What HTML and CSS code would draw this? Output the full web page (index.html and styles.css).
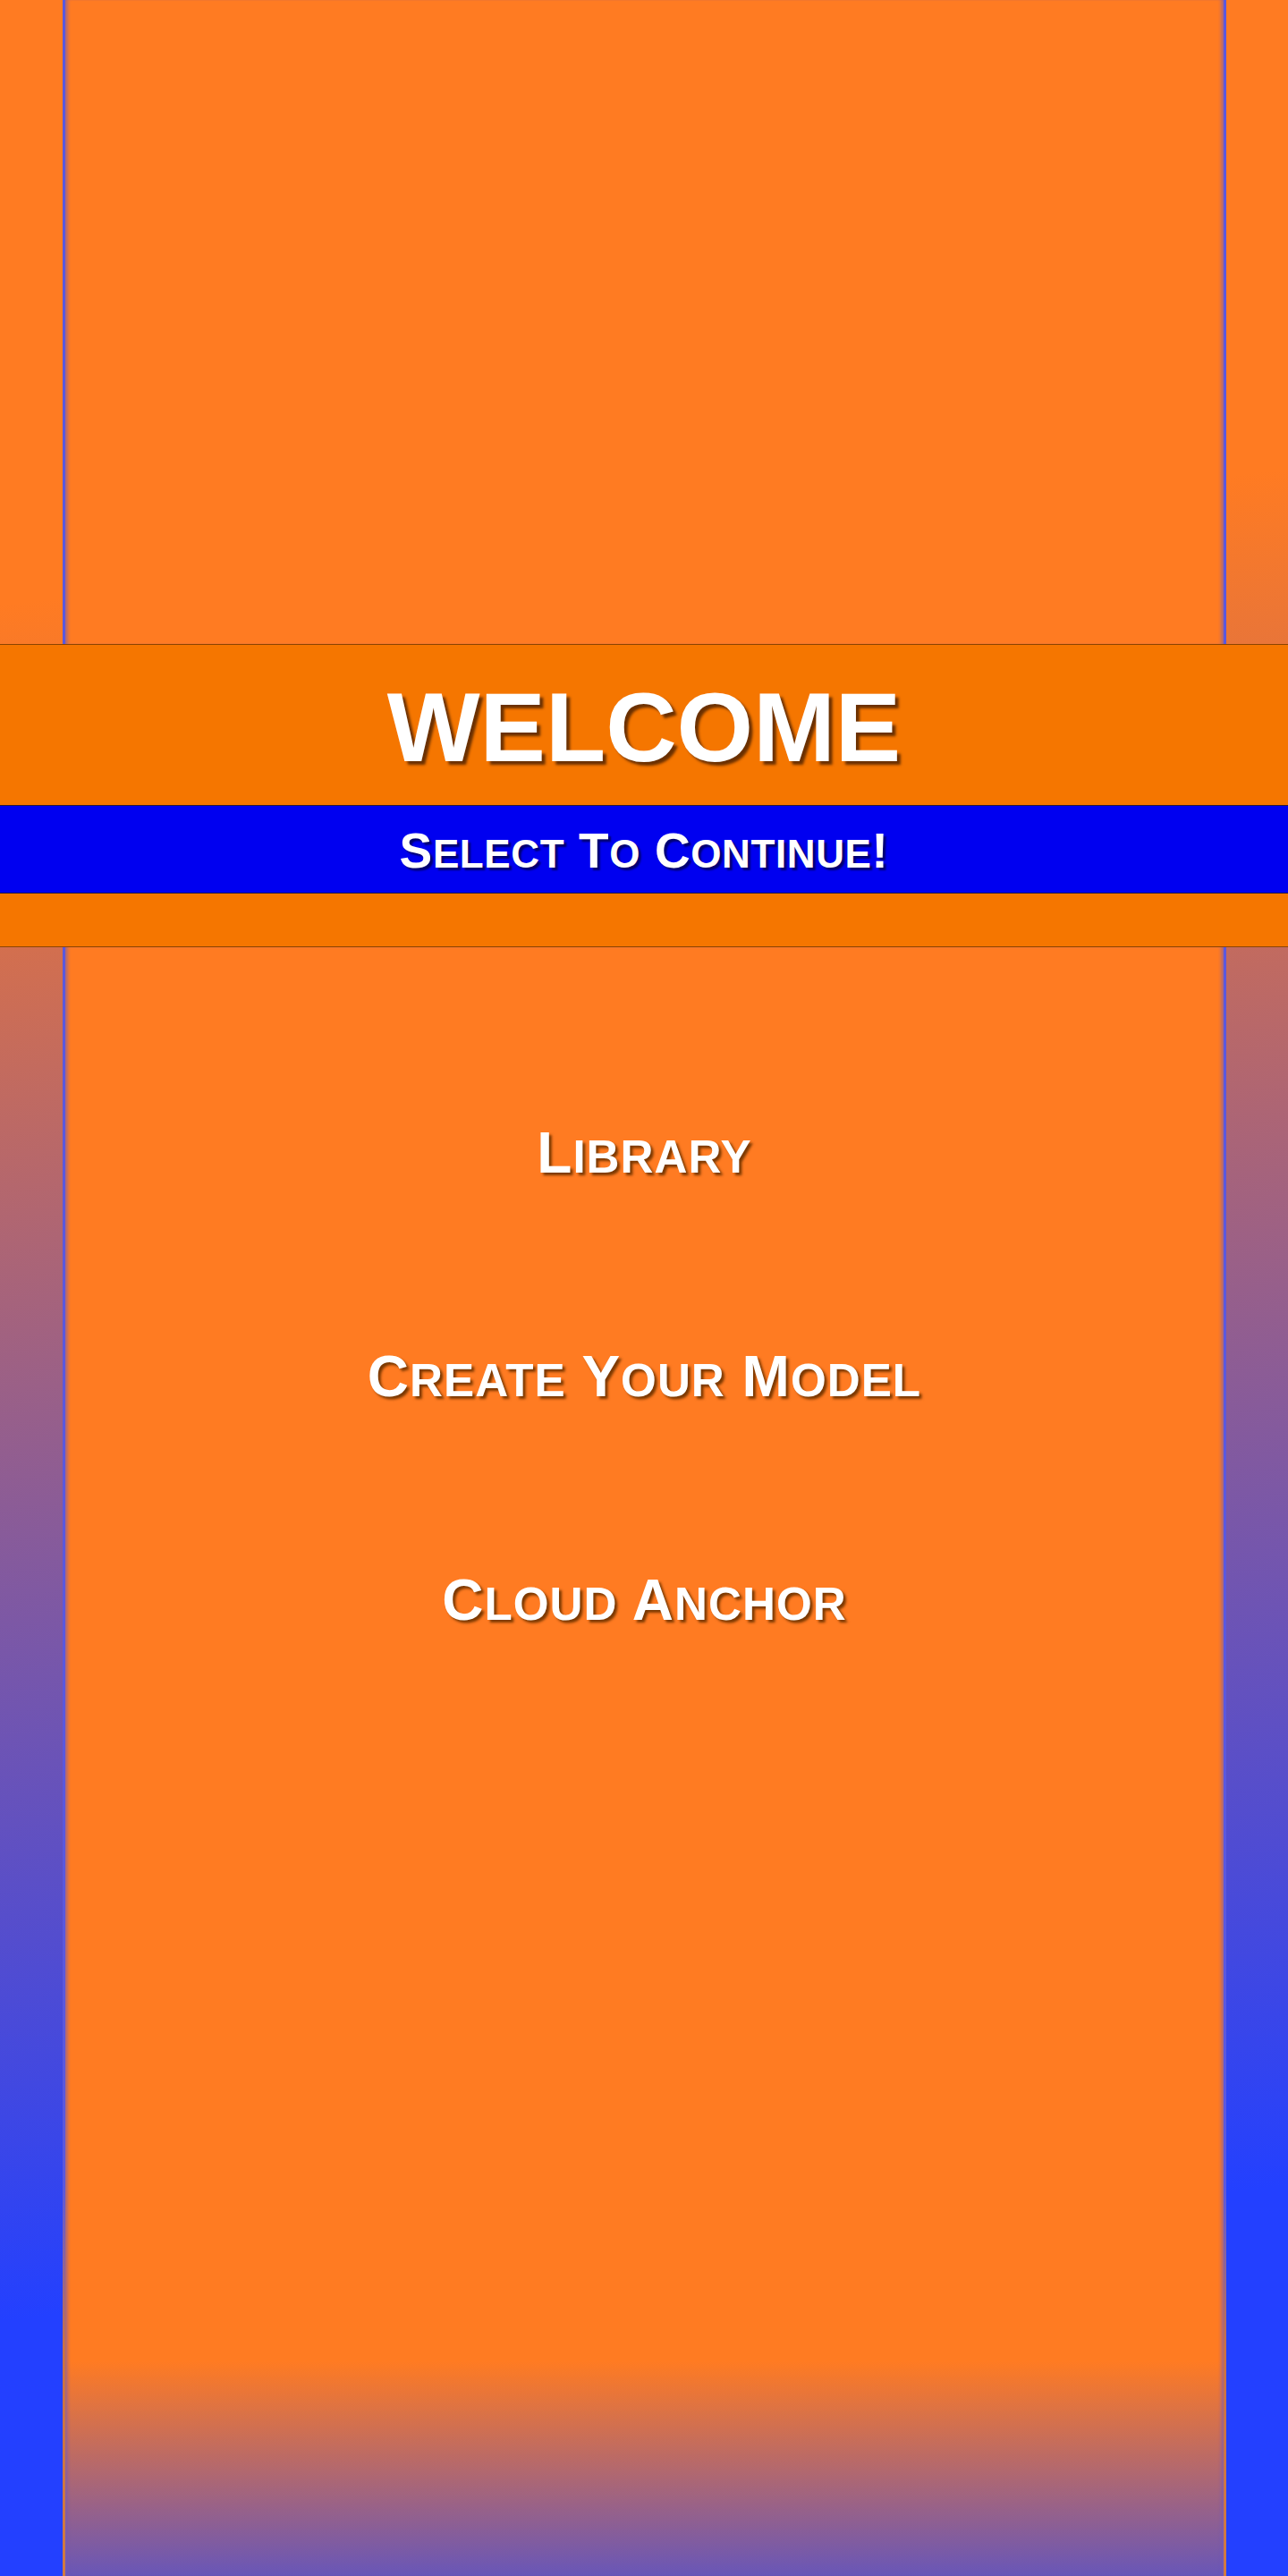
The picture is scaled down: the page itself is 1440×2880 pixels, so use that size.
FILE: index.html
```html
<!DOCTYPE html>
<html lang="en">
<head>
<meta charset="utf-8">
<title>Welcome</title>
<link rel="stylesheet" href="styles.css">
</head>
<body>
<div class="page">
  <div class="panel panel-top"></div>
  <header class="banner">
    <div class="banner-title"><h1 class="title">WELCOME</h1></div>
    <div class="banner-sub"><p class="subtitle">S<span class="sc">elect</span> T<span class="sc">o</span> C<span class="sc">ontinue</span>!</p></div>
    <div class="banner-foot"></div>
  </header>
  <main class="panel panel-bottom">
    <nav class="menu">
      <a class="menu-item" href="#">L<span class="sc">ibrary</span></a>
      <a class="menu-item" href="#">C<span class="sc">reate</span> Y<span class="sc">our</span> M<span class="sc">odel</span></a>
      <a class="menu-item" href="#">C<span class="sc">loud</span> A<span class="sc">nchor</span></a>
    </nav>
  </main>
</div>
</body>
</html>
```
FILE: styles.css
```css
html, body {
  margin: 0;
  padding: 0;
}
body {
  font-family: "Liberation Sans", Arial, sans-serif;
  background: linear-gradient(174deg, #ff7b22 0px, #ff7b22 672px, #2340ff 2581px, #2340ff 100%);
  min-height: 2880px;
}
.page {
  display: flex;
  flex-direction: column;
  height: 2880px;
}
.panel {
  margin: 0 69px 0 70px;
  border-style: solid;
  border-width: 0 3px;
  box-sizing: border-box;
  box-shadow: inset 5px 0 4px -3px rgba(110, 90, 190, 0.75), inset -5px 0 4px -3px rgba(110, 90, 190, 0.75);
}
.panel-top {
  height: 720px;
  flex: none;
  background: #ff7b22;
  border-image: linear-gradient(#5a58de, #5a58de) 1;
}
.panel-bottom {
  flex: 1;
  background: linear-gradient(to bottom, #ff7b22 0px, #ff7b22 1581px, #6856b8 100%);
  border-image: linear-gradient(to bottom, #5a58de 0%, #5a58de 76%, #c87048 86%, #d07a42 100%) 1;
}
.banner {
  flex: none;
  background: #f57600;
  border-top: 1px solid #8c4400;
  border-bottom: 1px solid #8c4400;
  display: flex;
  flex-direction: column;
}
.banner-title {
  height: 179px;
  display: flex;
  align-items: center;
  justify-content: center;
}
.title {
  margin: 0;
  color: #ffffff;
  font-size: 110px;
  font-weight: bold;
  line-height: 1;
  text-shadow: 4px 4px 3px #6a3000;
  padding-top: 4px;
}
.banner-sub {
  height: 97px;
  background: #0000f0;
  border-top: 1px solid #2a1a3a;
  border-bottom: 1px solid #2a1a3a;
  display: flex;
  align-items: center;
  justify-content: center;
}
.subtitle {
  margin: 0;
  color: #ffffff;
  font-size: 55px;
  font-weight: bold;
  letter-spacing: 0.6px;
  line-height: 1;
  text-shadow: 3px 3px 2px #000070;
  padding-top: 4px;
}
.sc {
  font-size: 0.8em;
  line-height: 1;
  text-transform: uppercase;
}
.banner-foot {
  height: 59px;
}
.menu {
  display: flex;
  flex-direction: column;
  align-items: center;
  gap: 170px;
  padding-top: 190px;
}
.menu-item {
  color: #ffffff;
  text-decoration: none;
  font-size: 64px;
  font-weight: bold;
  letter-spacing: 1px;
  line-height: 80px;
  text-shadow: 3px 3px 3px #7a3800;
}
```
